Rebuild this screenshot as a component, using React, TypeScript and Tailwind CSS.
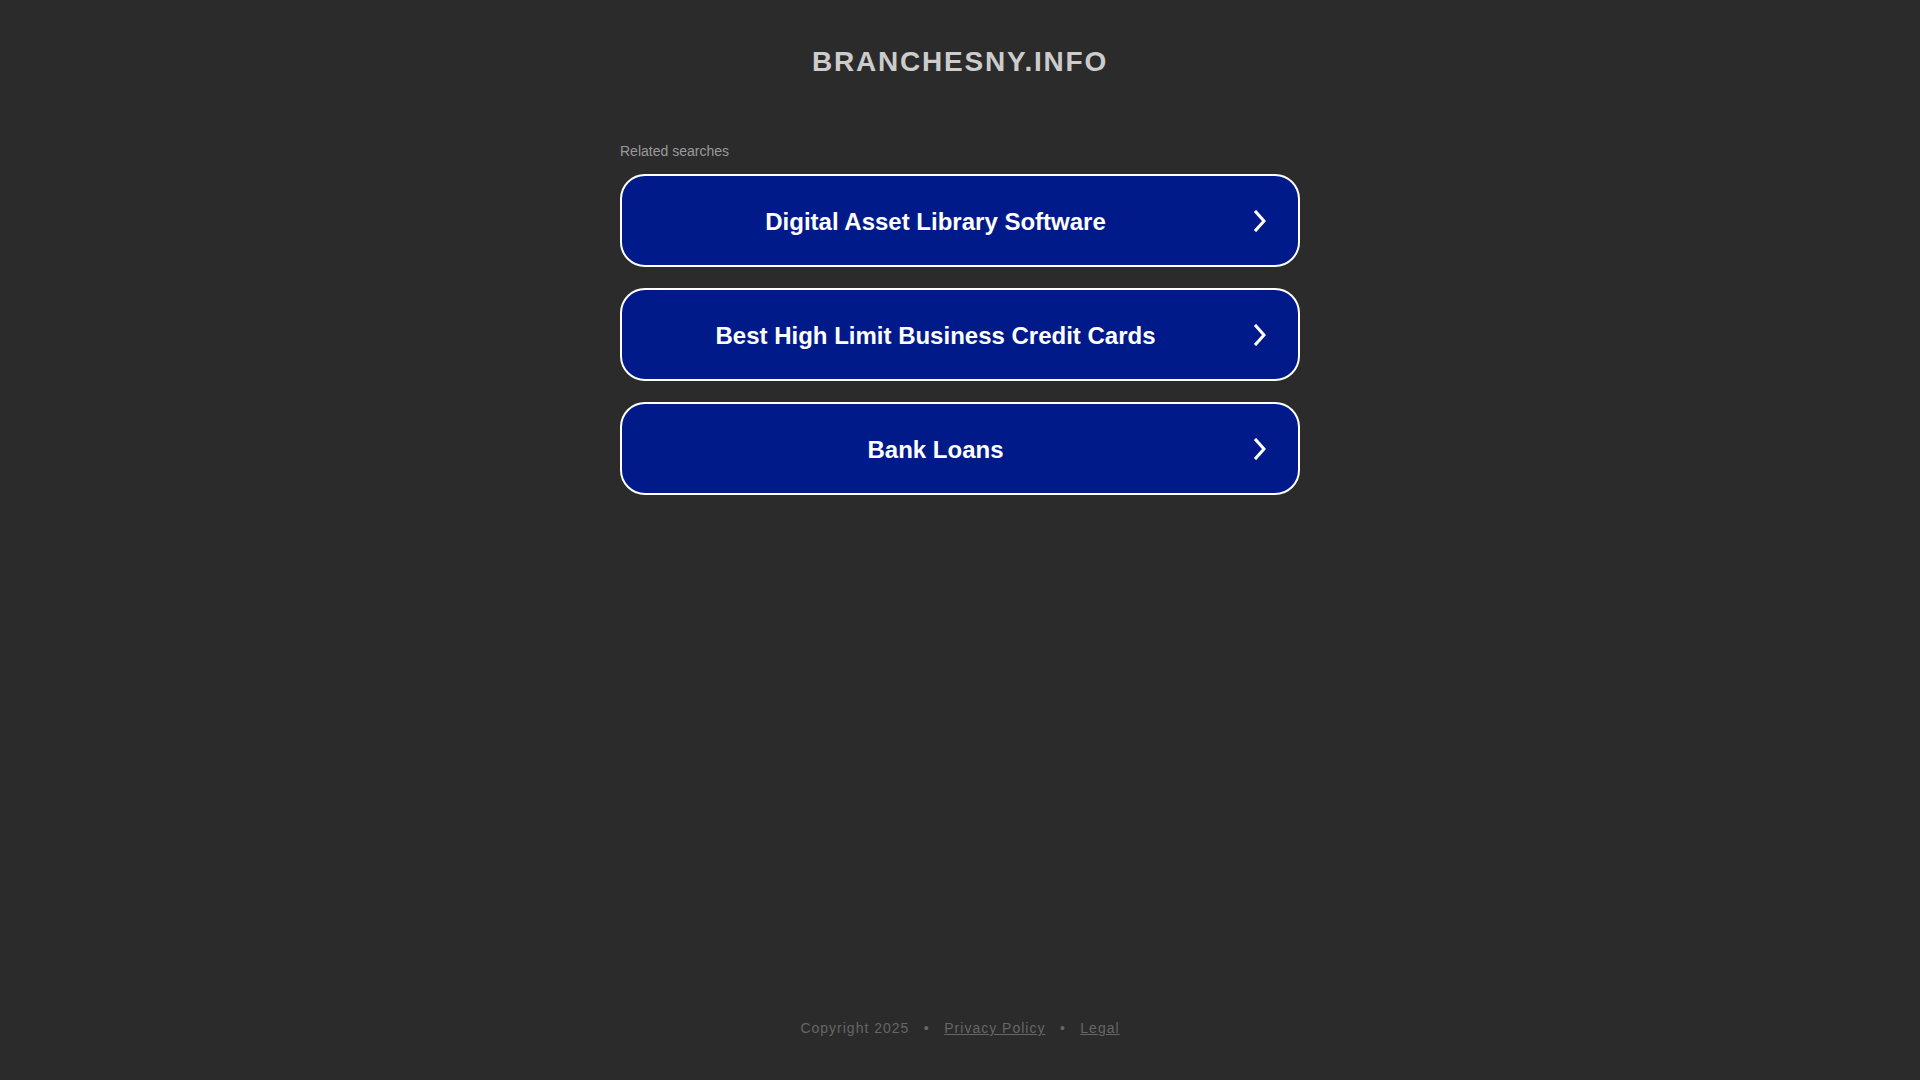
const searches = [
  'Digital Asset Library Software',
  'Best High Limit Business Credit Cards',
  'Bank Loans',
]

function Chevron() {
  return (
    <svg width="14" height="22" viewBox="0 0 14 22" fill="none" className="ml-1 mr-[31px] shrink-0">
      <polyline points="3,2 11,11 3,20" stroke="white" strokeWidth="3" strokeLinecap="square" strokeLinejoin="miter" />
    </svg>
  )
}

export default function App() {
  return (
    <div
      className="flex min-h-screen flex-col bg-[#2b2b2b]"
      style={{ fontFamily: '"Liberation Sans", Arial, sans-serif' }}
    >
      <header className="pt-[46px] text-center">
        <h1 className="text-[28px] font-bold leading-[32px] tracking-[1.8px] text-[#cccccc]">
          BRANCHESNY.INFO
        </h1>
      </header>

      <main className="mx-auto mt-[63px] w-[680px]">
        <p className="text-[14px] leading-[20px] text-[#9a9a9a]">Related searches</p>
        <div className="mt-[13px] flex flex-col gap-[21px]">
          {searches.map(s => (
            <a
              key={s}
              href="#"
              className="flex h-[93px] items-center rounded-[25px] border-2 border-white bg-[#011a8a] text-white"
            >
              <span className="flex-1 pt-[2px] text-center text-[24px] font-bold">{s}</span>
              <Chevron />
            </a>
          ))}
        </div>
      </main>

      <footer className="mt-auto pb-[42px] text-center text-[14px] leading-[20px] tracking-[1px] text-[#666666]">
        Copyright 2025
        <span className="mx-[14.5px]">•</span>
        <a href="#" className="underline">Privacy Policy</a>
        <span className="mx-[14.5px]">•</span>
        <a href="#" className="underline">Legal</a>
      </footer>
    </div>
  )
}
